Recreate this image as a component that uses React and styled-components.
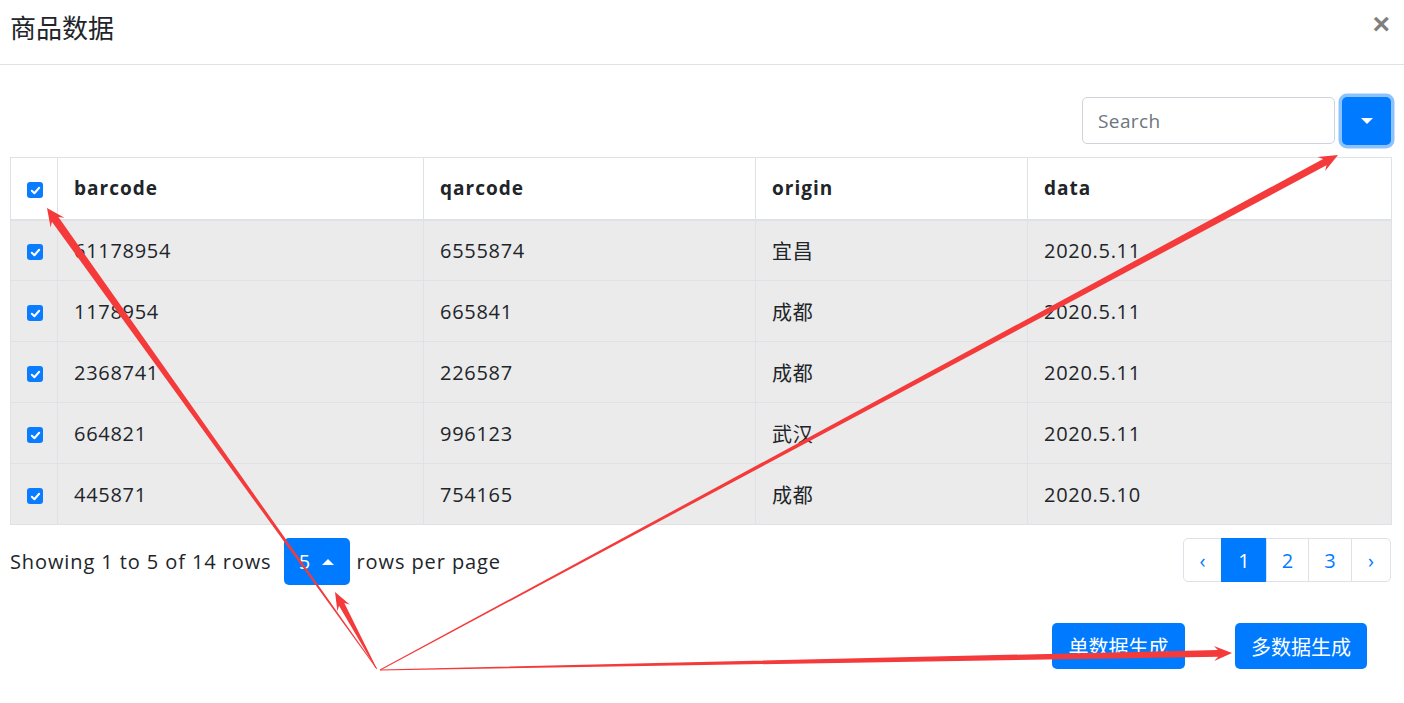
import React from "react";
import styled, { createGlobalStyle } from "styled-components";

const GlobalStyle = createGlobalStyle`
  html, body { margin: 0; padding: 0; background: #fff; }
  body {
    font-family: "Open Sans", "Noto Sans CJK SC", sans-serif;
    color: #212529;
  }
  * { box-sizing: border-box; }
`;

const CJK = `"Open Sans", "Noto Sans CJK SC", sans-serif`;

const Page = styled.div`
  position: relative;
  width: 1404px;
  height: 703px;
  overflow: hidden;
  background: #fff;
`;

const Header = styled.div`
  height: 65px;
  display: flex;
  align-items: flex-start;
  justify-content: space-between;
  padding: 7px 14px 0 10px;
  border-bottom: 1px solid #dee2e6;
`;

const Title = styled.h5`
  margin: 0;
  font-family: "Noto Sans CJK SC", sans-serif;
  font-weight: 400;
  font-size: 26px;
  line-height: 40px;
  color: #212529;
`;

const Close = styled.button`
  border: 0;
  background: transparent;
  padding: 0;
  margin: 2px 0 0;
  font-family: "Liberation Sans", sans-serif;
  font-size: 30px;
  font-weight: 700;
  line-height: 30px;
  color: #000;
  opacity: 0.5;
  cursor: pointer;
`;

const Body = styled.div`
  padding: 32px 13px 0 10px;
`;

const Toolbar = styled.div`
  display: flex;
  justify-content: flex-end;
  align-items: flex-start;
  gap: 7px;
  margin-bottom: 12px;
`;

const SearchInput = styled.input`
  width: 253px;
  height: 47px;
  border: 1px solid #ced4da;
  border-radius: 5px;
  padding: 0 15px;
  font-family: ${CJK};
  font-size: 19px;
  letter-spacing: 0.4px;
  color: #495057;
  outline: none;
  &::placeholder { color: #6c757d; }
`;

const PrimaryButton = styled.button`
  display: inline-flex;
  align-items: center;
  justify-content: center;
  gap: 12px;
  border: 0;
  border-radius: 5px;
  background: #007bff;
  color: #fff;
  font-family: ${CJK};
  font-size: 20px;
  width: ${(p) => p.$w}px;
  height: ${(p) => p.$h}px;
  padding: 0;
  cursor: pointer;
  box-shadow: ${(p) => (p.$focus ? "0 0 0 3.5px rgba(0,123,255,0.45)" : "none")};
`;

const Caret = styled.span`
  width: 0;
  height: 0;
  border-left: 6px solid transparent;
  border-right: 6px solid transparent;
  ${(p) => (p.$up ? "border-bottom: 6px solid #fff;" : "border-top: 6px solid #fff;")}
`;

const Table = styled.table`
  width: 1381px;
  border-collapse: collapse;
  table-layout: fixed;
  border: 1px solid #dee2e6;
  font-size: 20px;
  letter-spacing: 0.7px;
`;

const Th = styled.th`
  height: 62px;
  padding: 0 16px;
  text-align: ${(p) => (p.$center ? "center" : "left")};
  font-weight: 700;
  font-size: 19px;
  border-left: 1px solid #dee2e6;
  border-bottom: 2px solid #dee2e6;
  vertical-align: middle;
  background: #fff;
  letter-spacing: 1px;
`;

const Td = styled.td`
  height: 61px;
  padding: 0 16px;
  text-align: ${(p) => (p.$center ? "center" : "left")};
  border-left: 1px solid #dee2e6;
  border-top: 1px solid #dee2e6;
  vertical-align: middle;
  font-family: ${CJK};
`;

const Row = styled.tr`
  background: #ebebeb;
`;

const Check = styled.span`
  display: inline-flex;
  align-items: center;
  justify-content: center;
  width: 16px;
  height: 16px;
  border-radius: 3px;
  background: #0a7cff;
  vertical-align: middle;
`;

const Footer = styled.div`
  display: flex;
  justify-content: space-between;
  align-items: flex-start;
  margin-top: 13px;
  width: 1381px;
`;

const PageInfo = styled.div`
  display: flex;
  align-items: center;
  height: 47px;
  font-size: 20px;
  letter-spacing: 0.9px;
  gap: 7px;
`;

const InfoText = styled.span`
  margin-right: ${(p) => p.$mr || 0}px;
`;

const Pagination = styled.ul`
  display: flex;
  list-style: none;
  margin: 0;
  padding: 0;
`;

const PageItem = styled.li`
  width: ${(p) => p.$w}px;
  height: 44px;
  display: flex;
  align-items: center;
  justify-content: center;
  font-size: 20px;
  color: ${(p) => (p.$active ? "#fff" : "#007bff")};
  background: ${(p) => (p.$active ? "#007bff" : "#fff")};
  border: 1px solid ${(p) => (p.$active ? "#007bff" : "#dee2e6")};
  margin-left: -1px;
  &:first-child { margin-left: 0; border-radius: 5px 0 0 5px; }
  &:last-child { border-radius: 0 5px 5px 0; }
`;

const Actions = styled.div`
  display: flex;
  justify-content: flex-end;
  gap: 50px;
  padding-right: 24px;
  margin-top: 38px;
`;

const Overlay = styled.svg`
  position: absolute;
  left: 0;
  top: 0;
  width: 1404px;
  height: 703px;
  pointer-events: none;
`;

function arrow(tx, ty, px, py, headLen = 18, headHalf = 8, shaftHalf = 3.5, tailHalf = 0.4) {
  const dx = px - tx;
  const dy = py - ty;
  const len = Math.hypot(dx, dy);
  const ux = dx / len;
  const uy = dy / len;
  const nx = -uy;
  const ny = ux;
  const bx = px - ux * headLen;
  const by = py - uy * headLen;
  const jx = bx + ux * 4;
  const jy = by + uy * 4;
  const pts = [
    [tx + nx * tailHalf, ty + ny * tailHalf],
    [jx + nx * shaftHalf, jy + ny * shaftHalf],
    [bx + nx * headHalf, by + ny * headHalf],
    [px, py],
    [bx - nx * headHalf, by - ny * headHalf],
    [jx - nx * shaftHalf, jy - ny * shaftHalf],
    [tx - nx * tailHalf, ty - ny * tailHalf],
  ];
  return pts.map((p) => p.map((v) => v.toFixed(1)).join(",")).join(" ");
}

const CheckBox = () => (
  <Check>
    <svg width="11" height="11" viewBox="0 0 12 12">
      <path d="M2 6.3 L4.8 9 L10 3" fill="none" stroke="#fff" strokeWidth="2.2" strokeLinecap="round" strokeLinejoin="round" />
    </svg>
  </Check>
);

const rows = [
  ["61178954", "6555874", "宜昌", "2020.5.11"],
  ["1178954", "665841", "成都", "2020.5.11"],
  ["2368741", "226587", "成都", "2020.5.11"],
  ["664821", "996123", "武汉", "2020.5.11"],
  ["445871", "754165", "成都", "2020.5.10"],
];

const pages = [
  { label: "‹", w: 39 },
  { label: "1", w: 46, active: true },
  { label: "2", w: 43 },
  { label: "3", w: 44 },
  { label: "›", w: 40 },
];

export default function App() {
  return (
    <Page>
      <GlobalStyle />
      <Header>
        <Title>商品数据</Title>
        <Close aria-label="Close">×</Close>
      </Header>
      <Body>
        <Toolbar>
          <SearchInput placeholder="Search" />
          <PrimaryButton $w={49} $h={48} $focus>
            <Caret />
          </PrimaryButton>
        </Toolbar>
        <Table>
          <colgroup>
            <col style={{ width: 47 }} />
            <col style={{ width: 366 }} />
            <col style={{ width: 332 }} />
            <col style={{ width: 272 }} />
            <col style={{ width: 364 }} />
          </colgroup>
          <thead>
            <tr>
              <Th $center>
                <CheckBox />
              </Th>
              <Th>barcode</Th>
              <Th>qarcode</Th>
              <Th>origin</Th>
              <Th>data</Th>
            </tr>
          </thead>
          <tbody>
            {rows.map((r, i) => (
              <Row key={i}>
                <Td $center>
                  <CheckBox />
                </Td>
                {r.map((c, j) => (
                  <Td key={j}>{c}</Td>
                ))}
              </Row>
            ))}
          </tbody>
        </Table>
        <Footer>
          <PageInfo>
            <InfoText $mr={5}>Showing 1 to 5 of 14 rows</InfoText>
            <PrimaryButton $w={66} $h={47}>
              <span>5</span>
              <Caret $up />
            </PrimaryButton>
            <InfoText>rows per page</InfoText>
          </PageInfo>
          <Pagination>
            {pages.map((p, i) => (
              <PageItem key={i} $w={p.w} $active={p.active}>
                {p.label}
              </PageItem>
            ))}
          </Pagination>
        </Footer>
        <Actions>
          <PrimaryButton $w={133} $h={46}>单数据生成</PrimaryButton>
          <PrimaryButton $w={132} $h={46}>多数据生成</PrimaryButton>
        </Actions>
      </Body>
      <Overlay viewBox="0 0 1404 703">
        <g fill="#f43a3a">
          <polygon points={arrow(377, 669, 47, 208, 18, 8.5, 4)} />
          <polygon points={arrow(376, 668, 335, 592, 18, 7, 3)} />
          <polygon points={arrow(380, 670, 1338, 155, 19, 8, 3.6)} />
          <polygon points={arrow(380, 670, 1232, 653, 18, 7.5, 3.4)} />
        </g>
      </Overlay>
    </Page>
  );
}
